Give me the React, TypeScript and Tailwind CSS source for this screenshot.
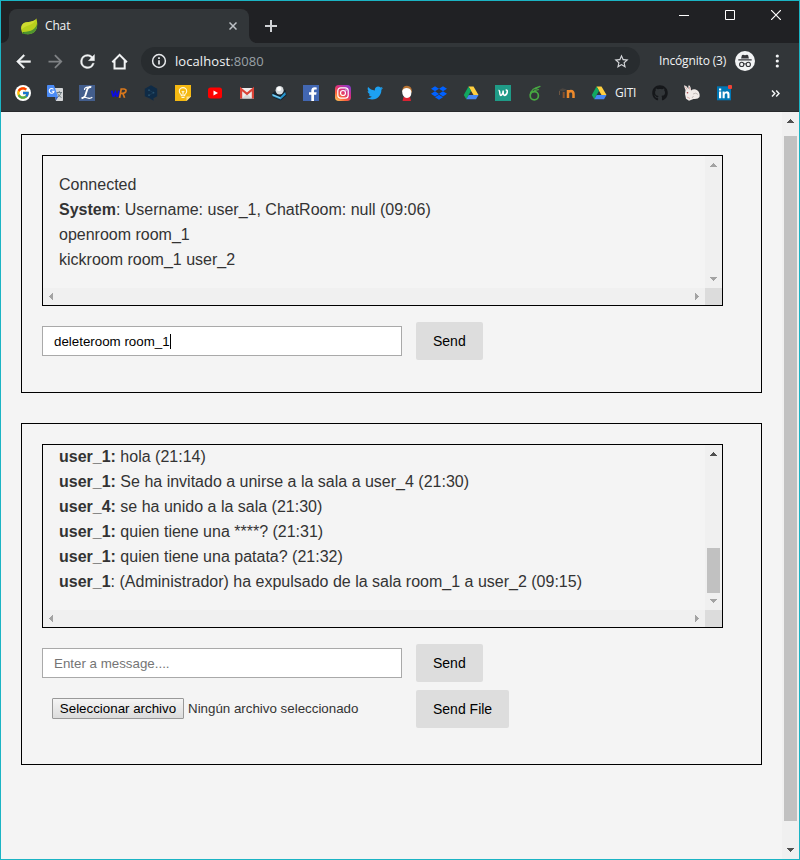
import type { ReactNode } from "react";
import { FcGoogle } from "react-icons/fc";
import { FaTwitter, FaDropbox, FaGithub } from "react-icons/fa";

const UI = "font-['Open_Sans','Noto_Sans',sans-serif]";

function Arrow({ dir, active = false }: { dir: "up" | "down" | "left" | "right"; active?: boolean }) {
  const paths = {
    up: "M3 0h1v1h1v1h1v1h1v1H0v-1h1v-1h1v-1h1z",
    down: "M0 0h7v1h-1v1h-1v1h-1v1h-1v-1h-1v-1h-1v-1h-1z",
    left: "M4 0v7h-1v-1h-1v-1h-1v-1h-1v-1h1v-1h1v-1h1v-1z",
    right: "M0 0h1v1h1v1h1v1h1v1h-1v1h-1v1h-1v1h-1z",
  };
  const vertical = dir === "up" || dir === "down";
  const w = vertical ? 7 : 4;
  const h = vertical ? 4 : 7;
  return (
    <svg width={w} height={h} viewBox={`0 0 ${w} ${h}`} fill={active ? "#505050" : "#a3a3a3"} className="block shrink-0">
      <path d={paths[dir]} />
    </svg>
  );
}

function TabStrip() {
  return (
    <div className="flex h-[42px] shrink-0 items-end justify-between bg-[#202124]">
      <div className="flex items-end">
        <svg width="8" height="8" fill="#323639"><path d="M8 0v8H0a8 8 0 0 0 8-8z" /></svg>
        <div className="flex h-[34px] w-[240px] items-center rounded-t-lg bg-[#323639] pl-3 pr-3">
          <svg width="17" height="17" viewBox="0 0 17 17" className="shrink-0">
            <path d="M15.4 .4C16.800 5 16.800 11.500 13 14.300 9.500 16.900 4.500 16.300 1.400 15.200-.6 11.500-.3 7.200 3 5.100 6.500 3 12.500 4.800 15.400.4z" fill="#b9d01c" />
            <path d="M15.400 .4C12.500 4.800 6.500 3 3 5.100 .8 6.600 0 9 .4 11.700 4 6.500 12.500 8.500 15.400.4z" fill="#cfdb30" />
            <path d="M16 5.500c-.8 5.500-6 8.300-13.600 8.500l-1.200 1.200C4.500 16.800 10.300 16.600 13.200 14.200 15.600 12 16.300 9 16 5.500z" fill="#4f9430" />
            <circle cx="2.400" cy="14.900" r=".9" fill="#3c7b28" />
          </svg>
          <span className={`${UI} ml-[7px] grow text-[12px] leading-4 tracking-[-0.15px] text-[#f1f3f4]`}>Chat</span>
          <svg width="8" height="8" stroke="#bdc1c6" strokeWidth="1.5"><path d="M.5.5l7 7M7.500.5l-7 7" /></svg>
        </div>
        <svg width="8" height="8" fill="#323639"><path d="M0 0v8h8a8 8 0 0 1-8-8z" /></svg>
        <svg width="12" height="12" stroke="#d0d2d5" strokeWidth="2" className="mb-[11px] ml-2"><path d="M6 0v12M0 6h12" /></svg>
      </div>
      <div className="mb-[23px] mr-[18px] flex gap-9">
        <svg width="10" height="10" fill="#fff"><path d="M0 5h10v1H0z" /></svg>
        <svg width="10" height="10" fill="none" stroke="#fff"><path d="M.5.5h9v9h-9z" /></svg>
        <svg width="10" height="10" stroke="#fff" strokeWidth="1.200"><path d="M0 0l10 10M10 0L0 10" /></svg>
      </div>
    </div>
  );
}

function Toolbar() {
  return (
    <div className="flex h-9 shrink-0 items-center pl-3">
      <div className="flex gap-[11px] text-[#f1f3f4]">
        <svg width="21" height="21" viewBox="0 0 24 24" fill="currentColor" stroke="currentColor" strokeWidth=".5"><path d="M20 11H7.830l5.590-5.590L12 4l-8 8 8 8 1.410-1.410L7.830 13H20z" /></svg>
        <svg width="21" height="21" viewBox="0 0 24 24" fill="#7f8285"><path d="M4 11h12.170l-5.590-5.590L12 4l8 8-8 8-1.410-1.410L16.170 13H4z" /></svg>
        <svg width="21" height="21" viewBox="0 0 24 24" fill="currentColor" stroke="currentColor" strokeWidth=".4"><path d="M17.650 6.350A7.960 7.960 0 0 0 12 4a8 8 0 1 0 7.730 10h-2.080A6 6 0 1 1 12 6c1.660 0 3.140.69 4.220 1.780L13 11h7V4z" /></svg>
        <svg width="21" height="21" viewBox="0 0 21 21" fill="none" stroke="currentColor" strokeWidth="2"><path d="M3.300 11.200L10.600 3.800l7.300 7.400M5.500 9.500v8h10.200v-8" /></svg>
      </div>
      <div className="ml-[11px] flex h-7 w-[499px] items-center rounded-full bg-[#282c2f] pl-[10px] pr-[10px]">
        <svg width="16" height="16" viewBox="0 0 16 16" fill="none" stroke="#e8eaed" strokeWidth="1.500"><circle cx="8" cy="8" r="6.400" /><path d="M8 7.200v4.200M8 4.300v1.600" strokeWidth="1.700" /></svg>
        <span className={`${UI} ml-2 grow text-[13px] leading-5 tracking-[0.08px] text-[#9aa0a6]`}><span className="text-[#f1f3f4]">localhost</span>:8080</span>
        <svg width="17" height="17" viewBox="0 0 24 24" fill="#d5d7da"><path d="M22 9.240l-7.190-.62L12 2 9.190 8.630 2 9.240l5.460 4.730L5.820 21 12 17.270 18.180 21l-1.630-7.030zM12 15.400l-3.760 2.270 1-4.280-3.320-2.880 4.380-.38L12 6.100l1.710 4.040 4.380.38-3.320 2.880 1 4.280z" /></svg>
      </div>
      <span className={`${UI} ml-[19px] w-[70px] whitespace-nowrap text-[12px] leading-5 tracking-[-0.15px] text-[#f1f3f4]`}>Incógnito (3)</span>
      <svg width="20" height="20" viewBox="0 0 20 20" className="ml-[6px]">
        <circle cx="10" cy="10" r="10" fill="#f1f3f4" />
        <path d="M6.900 4.200l1.100-.5 2 .5 2-.5 1.100.5.8 3.200H6.100zM3.300 8.300h13.400v1.100H3.300z" fill="#35363a" />
        <g fill="none" stroke="#35363a" strokeWidth="1.100"><circle cx="6.700" cy="13.400" r="2.100" /><circle cx="13.300" cy="13.400" r="2.100" /><path d="M8.800 13.100q1.200-.8 2.400 0" /></g>
      </svg>
      <svg width="4" height="14" fill="#f1f3f4" className="ml-5"><circle cx="2.300" cy="2" r="1.600" /><circle cx="2.300" cy="7" r="1.600" /><circle cx="2.300" cy="12" r="1.600" /></svg>
    </div>
  );
}

function Glyph({ children }: { children: ReactNode }) {
  return <svg width="16" height="16" viewBox="0 0 16 16" className="overflow-visible">{children}</svg>;
}

function DriveIcon() {
  return (
    <Glyph>
      <path d="M5.500 1.500h5l5 8.500h-5z" fill="#ffcf3f" />
      <path d="M5.500 1.500L8 5.800 3.300 14.200.8 10z" fill="#11a861" />
      <path d="M5.700 10h9.800L13 14.200H3.300z" fill="#4688f4" />
    </Glyph>
  );
}

const bookmarks: ReactNode[] = [
  <span className="flex size-4 items-center justify-center rounded-full bg-white"><FcGoogle size={14} /></span>,
  <Glyph>
    <path d="M6 3h9.200q.8 0 .8.800V15.200q0 .8-.8.800H9z" fill="#d4d6d8" />
    <path d="M9.500 7.500h5.500M12.300 6v1.500M14 8q-1 3-4 4.500M10.500 8.500q1.500 3 4 4" stroke="#6d7b80" fill="none" />
    <path d="M.8 0H7l4 12H.8Q0 12 0 11.200V.8Q0 0 .8 0z" fill="#4b8bf5" />
    <path d="M8 12h3l-2 3.500z" fill="#3563c4" />
    <path d="M6.500 4.300A2.400 2.400 0 1 0 7 6.300H4.800" fill="none" stroke="#fff" strokeWidth="1.100" />
  </Glyph>,
  <Glyph>
    <path d="M0 0h16v16H0z" fill="#435e8d" />
    <path d="M12.300 2.200Q9.300 1.300 8.300 4.300L6.300 10.500Q5.300 13 2.800 13.200" fill="none" stroke="#fff" strokeWidth="1.900" />
    <path d="M2.500 13.200Q5 11.500 8 12.800 11 14 13.300 12.300M5.500 5Q5.300 2.200 9 2.200" fill="none" stroke="#fff" strokeWidth="1.200" />
  </Glyph>,
  <Glyph>
    <path d="M.7 5.800l1.500 5.400h.6l1.600-4 1.500 4h.6L8 5.800" fill="none" stroke="#0c0ce0" strokeWidth="1.800" />
    <path d="M8.600 12.800L10.200 4h2.900q2.500.3 1.700 2.600-.8 1.900-4.700 1.900M11.900 8.500l1.700 4.200" fill="none" stroke="#d9781c" strokeWidth="1.700" />
  </Glyph>,
  <Glyph>
    <path d="M8 .3l6.200 3.400v7.600L10.500 13.300v2.400L7 13.500 1.800 11.300V3.700z" fill="#0f2b46" />
    <path d="M6 5.200l4.500 2.500L6 10.200" fill="none" stroke="#1c3d57" strokeWidth=".8" />
    <g fill="#27506c"><circle cx="6" cy="5.200" r=".9" /><circle cx="10.500" cy="7.700" r=".9" /><circle cx="6" cy="10.200" r=".9" /></g>
  </Glyph>,
  <Glyph>
    <path d="M0 0h16v11.500L11.500 16H0z" fill="#f5b912" /><path d="M16 11.500h-4.500V16z" fill="#ffe08a" />
    <path d="M6.300 9.800Q4.300 8.500 4.300 6.300a3.700 3.700 0 0 1 7.400 0q0 2.200-2 3.500v1H6.300zM6.500 12.500h3M8 7v3M6.800 6.200L8 7.400l1.200-1.200" fill="none" stroke="#fff8dd" strokeWidth="1.100" />
  </Glyph>,
  <Glyph><rect x="1" y="2.500" width="14" height="11" rx="2.500" fill="#f00" /><path d="M6.500 5.500v5L11 8z" fill="#fff" /></Glyph>,
  <Glyph>
    <path d="M1 3h14v10.500H1z" fill="#ededed" /><path d="M3 13.500L8 9l5 4.500z" fill="#d7d7d7" />
    <path d="M2.100 13.500V4L8 8.800 13.900 4v9.500" fill="none" stroke="#da4337" strokeWidth="2.200" />
  </Glyph>,
  <Glyph>
    <path d="M1 8.500L6 4.500l8.500.5 1 5.500-6 5L1.500 12z" fill="#15222c" />
    <path d="M1.300 8.700L9.300 12l4.900-5 .6 2.800-5.300 4.700L1.500 11.300z" fill="#2795ce" />
    <path d="M1.500 9.200l7.800 3.200.2 1.100L1.600 10.600z" fill="#8ed2ee" />
    <ellipse cx="8.600" cy="5.200" rx="4" ry="4.300" fill="#d5dadd" /><ellipse cx="8" cy="3.900" rx="2.300" ry="2.100" fill="#fff" />
  </Glyph>,
  <Glyph><path d="M0 0h16v16H0z" fill="#4267b2" /><path d="M11 16V9.800h2.200l.4-2.500H11V5.900c0-.8.400-1.300 1.400-1.300h1.300V2.400q-5.400-.9-5.400 3.200v1.700H6v2.500h2.300V16z" fill="#fff" /></Glyph>,
  <Glyph>
    <defs>
      <linearGradient id="ig" x1="0" y1="1" x2=".8" y2="0"><stop offset="0" stopColor="#ffd65c" /><stop offset=".35" stopColor="#f9603b" /><stop offset=".65" stopColor="#d62e82" /><stop offset="1" stopColor="#8a3ac8" /></linearGradient>
    </defs>
    <rect width="16" height="16" rx="3.800" fill="url(#ig)" />
    <g fill="none" stroke="#fff" strokeWidth="1.200"><rect x="2.800" y="2.800" width="10.400" height="10.400" rx="3" /><circle cx="8" cy="8" r="2.500" /></g><circle cx="11" cy="5" r=".7" fill="#fff" />
  </Glyph>,
  <FaTwitter size={16} color="#1da1f2" />,
  <Glyph>
    <path d="M3.500 16l1-4h6.500l1 4z" fill="#d92332" /><path d="M3.200 6Q3.500.8 8 .7q4.800.2 4.900 5.800L11.500 9z" fill="#b87434" />
    <path d="M3.100 6Q4.500 2.600 9 3.200 12.500 4 12.400 7.500 12.300 12.800 8 13 3.300 12.500 3.100 6z" fill="#fff" />
  </Glyph>,
  <FaDropbox size={16} color="#0061ff" />,
  <DriveIcon />,
  <Glyph>
    <path d="M0 0h16v16H0z" fill="#1f9b87" />
    <path d="M3.500 5.500Q4.700 5.200 4.800 8 5 11 6.500 10.200 8 9 8.200 5.500 8 10.500 9.700 10.500 12.500 9.500 12.300 6 12 4.500 10.700 5.300" fill="none" stroke="#fff" strokeWidth="1.500" />
  </Glyph>,
  <Glyph><circle cx="7.300" cy="10.700" r="4.100" fill="none" stroke="#48a942" strokeWidth="1.700" /><path d="M3.300 10Q3.300 3.500 13.300 1.300 9.500 4 5.800 4.100M6 7q2.500-2.500 5.800-2.300" fill="none" stroke="#48a942" strokeWidth="1.300" /></Glyph>,
  <Glyph>
    <path d="M-.3 5.300L3.500 3.300 7.800 4.600 4 6.600z" fill="#4a4540" /><path d="M.5 6v4" stroke="#6b5542" /><path d="M4.700 13V7" stroke="#8d542b" strokeWidth="2" />
    <path d="M9 13V5M9 7.800Q10 6 11.800 6q2.700.2 2.700 3v4" fill="none" stroke="#ee8a2b" strokeWidth="2.500" />
  </Glyph>,
  <DriveIcon />,
];

const bookmarksAfter: ReactNode[] = [
  <FaGithub size={16} color="#15171a" />,
  <Glyph>
    <path d="M1.500 5Q-.5.5.5.3 3 1 4.500 4 4 .3 5 .3 7 1.500 7 5.500 10 2.800 13.500 5.500 16.300 8 15.500 12 14 14.500 9.500 14L5 15.800l-3-2L1 9z" fill="#f1ecea" />
    <path d="M1.300 1.500l1.700 3M5.300 1.800l.8 3M3 12l3 1.500" stroke="#d6a29e" strokeWidth=".8" /><circle cx="3.500" cy="7.700" r=".8" fill="#a53c42" /><path d="M9 9q3-2 5 .5M8 13l1.500-2" fill="none" stroke="#b9b1ae" strokeWidth=".8" />
  </Glyph>,
  <Glyph>
    <path d="M1 1.300h14v14H1z" fill="#0077b5" />
    <path d="M3 6.500h2.200v6.800H3zM3 3.500h2.200v1.900H3zM6.600 6.500h2v1q2.300-2.200 4.200-.5.700.8.700 2.300v4h-2.100V9.800q0-1.600-1.200-1.600-1.500 0-1.500 1.700v3.400H6.600z" fill="#fff" />
    <rect x="12" y="0" width="4" height="4" rx="1" fill="#f44336" />
  </Glyph>,
];

function Bookmarks() {
  return (
    <div className="flex h-8 shrink-0 items-center border-b border-[#27292b] pb-[5px] pl-[6px]">
      {bookmarks.map((icon, i) => <span key={i} className="flex w-8 shrink-0 justify-center">{icon}</span>)}
      <span className={`${UI} w-[29px] shrink-0 text-[12px] leading-4 tracking-[-0.2px] text-[#f1f3f4]`}>GITI</span>
      {bookmarksAfter.map((icon, i) => <span key={i} className="flex w-8 shrink-0 justify-center">{icon}</span>)}
      <svg width="9" height="7" fill="none" stroke="#f1f3f4" strokeWidth="1.500" className="ml-[31px]"><path d="M1 .600l2.800 2.900L1 6.400M5.200.6L8 3.500 5.200 6.400" /></svg>
    </div>
  );
}

type Line = { who?: string; text: string };

function Log({ lines, scrolled = false }: { lines: Line[]; scrolled?: boolean }) {
  return (
    <div className={`flex w-[681px] shrink-0 flex-col border border-black ${scrolled ? "h-[184px]" : "h-[151px]"}`}>
      <div className="flex min-h-0 grow">
        <div className={`grow overflow-hidden px-4 text-[16px] leading-[25px] text-[#333] ${scrolled ? "" : "pt-4"}`}>
          <div className={scrolled ? "-mt-px" : ""}>
            {lines.map((l, i) => <p key={i} className="whitespace-nowrap">{l.who && <b>{l.who}</b>}{l.text}</p>)}
          </div>
        </div>
        <div className="flex w-[17px] shrink-0 flex-col items-center justify-between bg-[#f0f0f0] py-[7px]">
          <Arrow dir="up" active={scrolled} />
          {scrolled && <div className="mb-[6px] mt-auto h-[45px] w-[13px] bg-[#c1c1c1]" />}
          <Arrow dir="down" />
        </div>
      </div>
      <div className="flex h-[17px] shrink-0">
        <div className="flex grow items-center justify-between bg-[#f0f0f0] px-[6px]"><Arrow dir="left" /><Arrow dir="right" /></div>
        <div className="w-[17px] bg-[#dcdcdc]" />
      </div>
    </div>
  );
}

function Button({ children }: { children: ReactNode }) {
  return <button className="h-[38px] rounded-[2px] bg-[#ddd] px-[17px] text-[14px] text-black">{children}</button>;
}

export default function App() {
  return (
    <div className="flex h-[860px] w-[800px] flex-col overflow-hidden border border-[#1bb4c4] bg-[#f4f4f4] font-['Liberation_Sans',Arial,sans-serif]">
      <TabStrip />
      <div className="flex h-[69px] shrink-0 flex-col justify-between bg-[#323639]">
        <Toolbar />
        <Bookmarks />
      </div>
      <div className="flex min-h-0 grow justify-between">
        <main className="pl-5 pt-[22px]">
          <section className="h-[259px] w-[741px] border border-black p-5">
            <Log
              lines={[
                { text: "Connected" },
                { who: "System", text: ": Username: user_1, ChatRoom: null (09:06)" },
                { text: "openroom room_1" },
                { text: "kickroom room_1 user_2" },
              ]}
            />
            <div className="mt-4 flex items-center gap-[14px]">
              <div className="flex h-[30px] w-[360px] items-center border border-[#a9a9a9] bg-white pl-[11px] pt-px text-[13.333px] text-black">
                deleteroom room_1<span className="h-[15px] w-px bg-black" />
              </div>
              <Button>Send</Button>
            </div>
          </section>
          <section className="mt-[30px] h-[342px] w-[741px] border border-black p-5">
            <Log
              scrolled
              lines={[
                { who: "user_1:", text: " hola (21:14)" },
                { who: "user_1:", text: " Se ha invitado a unirse a la sala a user_4 (21:30)" },
                { who: "user_4:", text: " se ha unido a la sala (21:30)" },
                { who: "user_1:", text: " quien tiene una ****? (21:31)" },
                { who: "user_1:", text: " quien tiene una patata? (21:32)" },
                { who: "user_1", text: ": (Administrador) ha expulsado de la sala room_1 a user_2 (09:15)" },
              ]}
            />
            <div className="mt-4 flex items-center gap-[14px]">
              <input placeholder="Enter a message...." className="h-[30px] w-[360px] border border-[#a9a9a9] bg-white pl-[11px] text-[13.333px] placeholder:text-[#757575]" />
              <Button>Send</Button>
            </div>
            <div className="mt-2 flex items-center gap-[14px]">
              <div className="flex w-[360px] items-center pb-px pl-[10px] text-[13.333px] text-[#333]">
                <button className="h-[21px] w-[132px] whitespace-nowrap rounded-[1px] border border-[#999] bg-linear-to-b from-[#f5f5f5] to-[#dcdcdc] text-black">Seleccionar archivo</button>
                <span className="ml-1">Ningún archivo seleccionado</span>
              </div>
              <Button>Send File</Button>
            </div>
          </section>
        </main>
        <div className="flex w-[17px] shrink-0 flex-col items-center bg-[#f0f0f0] py-[7px]">
          <Arrow dir="up" active />
          <div className="mt-[13px] h-[685px] w-[13px] bg-[#c1c1c1]" />
          <div className="mt-auto"><Arrow dir="down" active /></div>
        </div>
      </div>
    </div>
  );
}
